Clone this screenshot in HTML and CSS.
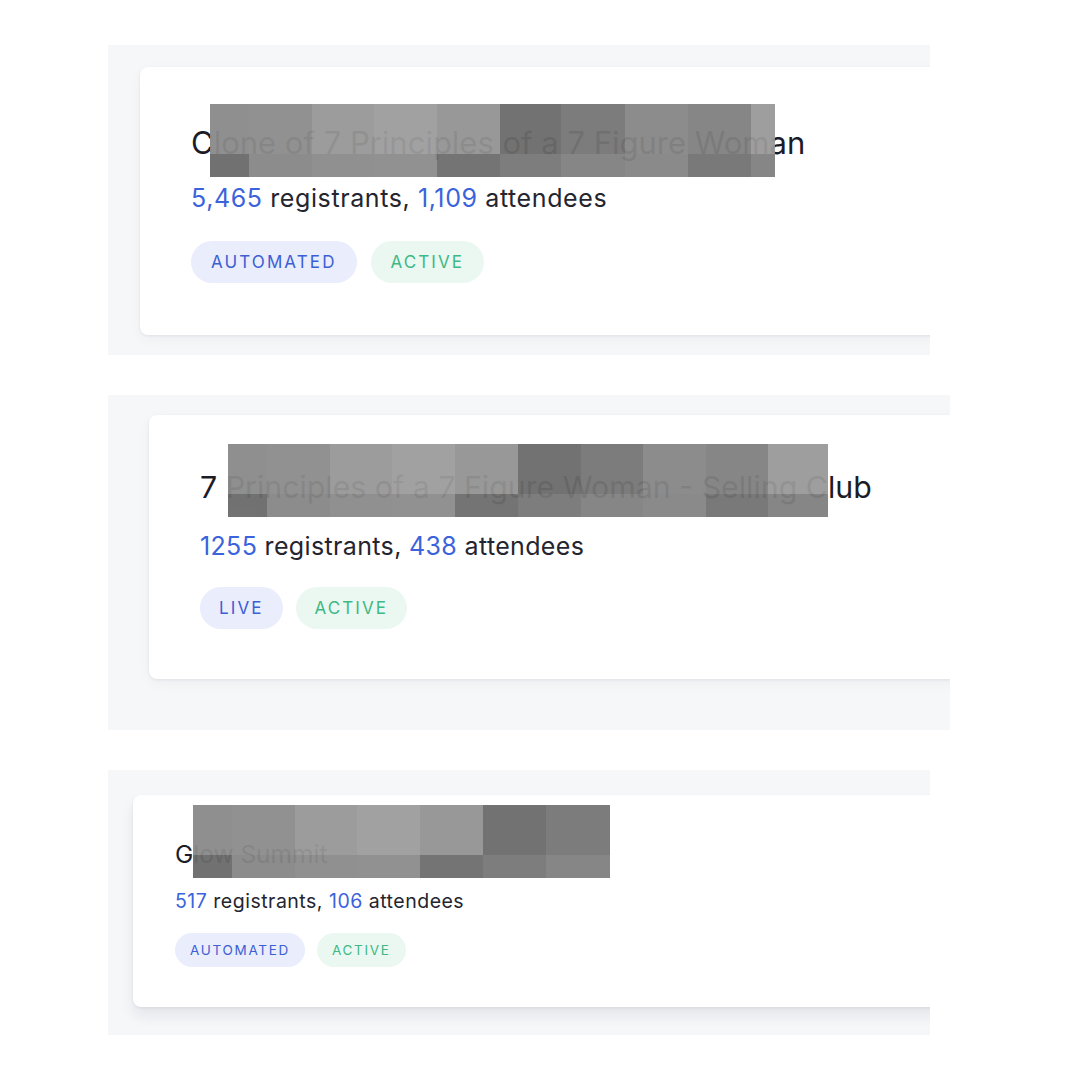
FILE: index.html
```html
<!DOCTYPE html>
<html lang="en">
<head>
<meta charset="utf-8">
<title>Webinars</title>
<link rel="stylesheet" href="styles.css">
</head>
<body>
  <section class="shot shot-1">
    <div class="card card-1">
      <div class="title">
        <span class="title-text">Clone of 7 Principles of a 7 Figure Woman</span>
        <div class="mosaic">
          <div class="mcol w39"><i></i><b></b></div>
          <div class="mcol w63"><i></i><b></b></div>
          <div class="mcol w62"><i></i><b></b></div>
          <div class="mcol w63"><i></i><b></b></div>
          <div class="mcol w63"><i></i><b></b></div>
          <div class="mcol w61"><i></i><b></b></div>
          <div class="mcol w64"><i></i><b></b></div>
          <div class="mcol w63"><i></i><b></b></div>
          <div class="mcol w63"><i></i><b></b></div>
          <div class="mcol w24"><i></i><b></b></div>
        </div>
      </div>
      <div class="stats"><span class="num">5,465</span> registrants, <span class="num">1,109</span> attendees</div>
      <div class="tags">
        <span class="tag tag-blue">Automated</span>
        <span class="tag tag-green">Active</span>
      </div>
    </div>
  </section>

  <section class="shot shot-2">
    <div class="card card-2">
      <div class="title">
        <span class="title-text">7 Principles of a 7 Figure Woman - Selling Club</span>
        <div class="mosaic">
          <div class="mcol w39"><i></i><b></b></div>
          <div class="mcol w63"><i></i><b></b></div>
          <div class="mcol w62"><i></i><b></b></div>
          <div class="mcol w63"><i></i><b></b></div>
          <div class="mcol w63"><i></i><b></b></div>
          <div class="mcol w63"><i></i><b></b></div>
          <div class="mcol w62"><i></i><b></b></div>
          <div class="mcol w63"><i></i><b></b></div>
          <div class="mcol w62"><i></i><b></b></div>
          <div class="mcol w60"><i></i><b></b></div>
        </div>
      </div>
      <div class="stats"><span class="num">1255</span> registrants, <span class="num">438</span> attendees</div>
      <div class="tags">
        <span class="tag tag-blue">Live</span>
        <span class="tag tag-green">Active</span>
      </div>
    </div>
  </section>

  <section class="shot shot-3">
    <div class="card card-3">
      <div class="title">
        <span class="title-text">Glow Summit</span>
        <div class="mosaic">
          <div class="mcol w39"><i></i><b></b></div>
          <div class="mcol w63"><i></i><b></b></div>
          <div class="mcol w62"><i></i><b></b></div>
          <div class="mcol w63"><i></i><b></b></div>
          <div class="mcol w63"><i></i><b></b></div>
          <div class="mcol w63"><i></i><b></b></div>
          <div class="mcol w64"><i></i><b></b></div>
        </div>
      </div>
      <div class="stats"><span class="num">517</span> registrants, <span class="num">106</span> attendees</div>
      <div class="tags">
        <span class="tag tag-blue">Automated</span>
        <span class="tag tag-green">Active</span>
      </div>
    </div>
  </section>
</body>
</html>
```

FILE: styles.css
```css
* { box-sizing: border-box; }

html, body {
  margin: 0;
  padding: 0;
  background: #ffffff;
}

body {
  width: 1080px;
  height: 1080px;
  overflow: hidden;
  font-family: "Inter", "Noto Sans", sans-serif;
  color: #22232d;
  padding-top: 45px;
}

/* screenshot panels */
.shot {
  margin-left: 108px;
  background: #f6f7f9;
  overflow: hidden;
}

.shot-1 { width: 822px; height: 310px; padding: 22px 0 0 32px; }
.shot-2 { width: 842px; height: 335px; padding: 20px 0 0 41px; margin-top: 40px; }
.shot-3 { width: 822px; height: 265px; padding: 25px 0 0 25px; margin-top: 40px; }

/* cards */
.card {
  background: #ffffff;
  border-radius: 8px 0 0 8px;
  width: calc(100% + 20px);
  box-shadow: 0 1px 3px rgba(20, 30, 50, 0.07), 0 4px 14px rgba(20, 30, 50, 0.04);
}

.card-1 { height: 268px; padding: 56px 0 0 51px; }
.card-2 { height: 264px; padding: 52px 0 0 51px; }
.card-3 {
  height: 212px;
  padding: 43px 0 0 42px;
  box-shadow: 0 1px 3px rgba(20, 30, 50, 0.07), 0 9px 14px rgba(20, 30, 50, 0.08);
}

/* title with pixelated cover */
.title {
  position: relative;
  font-size: 31px;
  line-height: 40px;
  color: #1b1c28;
  white-space: nowrap;
}
.card-2 .title { font-size: 30.3px; }
.card-3 .title { font-size: 24.5px; line-height: 32px; }

.mosaic {
  position: absolute;
  display: flex;
  top: -19.5px;
  left: 19px;
  opacity: 0.95;
}
.card-2 .mosaic { top: -23.5px; left: 28px; }
.card-3 .mosaic { top: -33px; left: 18px; }

.mcol { display: flex; flex-direction: column; }
.mcol i, .mcol b { display: block; }
.mcol i { height: 50px; }
.mcol b { height: 23px; }

.w24 { width: 24px; }
.w39 { width: 39px; }
.w60 { width: 60px; }
.w61 { width: 61px; }
.w62 { width: 62px; }
.w63 { width: 63px; }
.w64 { width: 64px; }

.mcol:nth-child(1) i  { background: #8a8a8a; } .mcol:nth-child(1) b  { background: #6a6a6a; }
.mcol:nth-child(2) i  { background: #8c8c8c; } .mcol:nth-child(2) b  { background: #868686; }
.mcol:nth-child(3) i  { background: #979797; } .mcol:nth-child(3) b  { background: #8b8b8b; }
.mcol:nth-child(4) i  { background: #9d9d9d; } .mcol:nth-child(4) b  { background: #8c8c8c; }
.mcol:nth-child(5) i  { background: #939393; } .mcol:nth-child(5) b  { background: #6d6d6d; }
.mcol:nth-child(6) i  { background: #6b6b6b; } .mcol:nth-child(6) b  { background: #777777; }
.mcol:nth-child(7) i  { background: #757575; } .mcol:nth-child(7) b  { background: #808080; }
.mcol:nth-child(8) i  { background: #868686; } .mcol:nth-child(8) b  { background: #848484; }
.mcol:nth-child(9) i  { background: #808080; } .mcol:nth-child(9) b  { background: #727272; }
.mcol:nth-child(10) i { background: #999999; } .mcol:nth-child(10) b { background: #808080; }

/* stats line */
.stats {
  font-size: 25px;
  line-height: 32px;
  letter-spacing: 0.6px;
  color: #24252f;
  margin-top: 19px;
  white-space: nowrap;
}
.card-2 .stats { margin-top: 22.5px; letter-spacing: 0.35px; }
.card-3 .stats {
  font-size: 19.5px;
  line-height: 26px;
  letter-spacing: 0.5px;
  margin-top: 18px;
}

.num { color: #3b63dc; }

/* tags */
.tags {
  display: flex;
  gap: 14px;
  margin-top: 27px;
}
.card-2 .tags { margin-top: 25px; gap: 13px; }
.card-3 .tags { margin-top: 19px; gap: 12px; }

.tag {
  display: inline-flex;
  align-items: center;
  height: 42px;
  padding: 0 20px;
  border-radius: 21px;
  font-size: 17px;
  letter-spacing: 2.1px;
  text-transform: uppercase;
  font-weight: 400;
}
.card-2 .tag { padding: 0 19px; }
.card-3 .tag {
  height: 34px;
  padding: 0 15px;
  border-radius: 17px;
  font-size: 13.5px;
  letter-spacing: 1.7px;
}

.tag-blue { background: #e9edfc; color: #3c5fd4; }
.tag-green { background: #ebf8f2; color: #3eb884; }
```
